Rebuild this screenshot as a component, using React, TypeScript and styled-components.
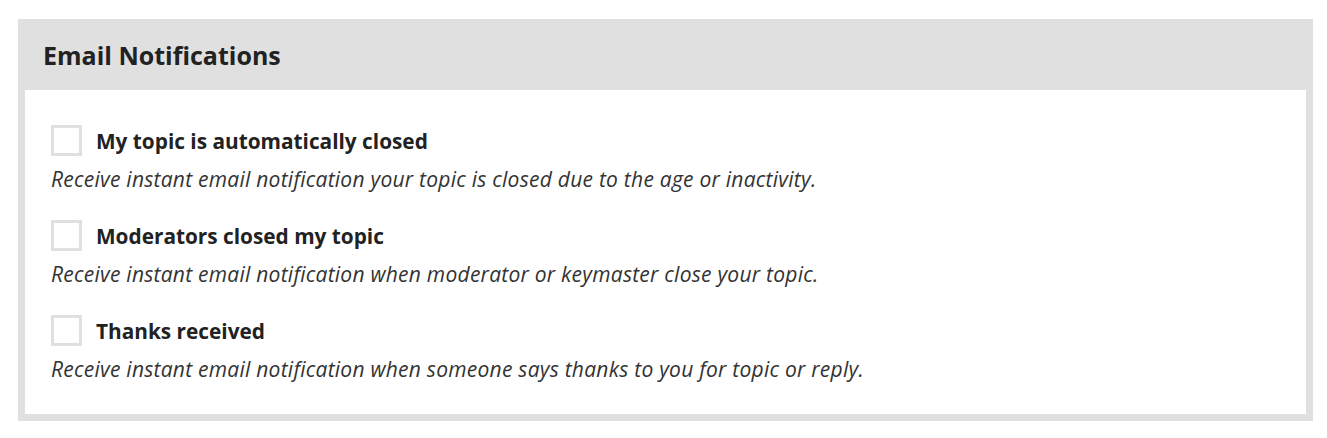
import React from "react";
import styled, { createGlobalStyle } from "styled-components";

const GlobalStyle = createGlobalStyle`
  body {
    margin: 0;
    background: #fff;
    font-family: "Open Sans", "Noto Sans", sans-serif;
    color: #222;
  }
`;

const Page = styled.div`
  padding: 19px 14px 17px 18px;
`;

const Panel = styled.section`
  background: #e0e0e0;
  padding: 0 7px 7px 7px;
`;

const PanelHeader = styled.h2`
  margin: 0;
  height: 71px;
  display: flex;
  align-items: center;
  padding-left: 18px;
  font-size: 25px;
  font-weight: 700;
  color: #222;
`;

const PanelBody = styled.div`
  background: #fff;
  padding: 35px 26px 31px 26px;
  display: flex;
  flex-direction: column;
  gap: 27px;
`;

const Option = styled.div`
  display: flex;
  flex-direction: column;
  gap: 9px;
`;

const OptionRow = styled.label`
  display: flex;
  align-items: center;
  gap: 14px;
  cursor: pointer;
`;

const Box = styled.input`
  appearance: none;
  margin: 0;
  width: 31px;
  height: 31px;
  border: 3px solid #e0e0e0;
  background: #fff;
  box-sizing: border-box;
`;

const OptionTitle = styled.span`
  font-size: 20.8px;
  font-weight: 700;
  color: #222;
`;

const OptionHint = styled.p`
  margin: 0;
  font-size: 21px;
  letter-spacing: 0.25px;
  font-style: italic;
  line-height: 28px;
  color: #333;
`;

const options = [
  {
    title: "My topic is automatically closed",
    hint: "Receive instant email notification your topic is closed due to the age or inactivity.",
  },
  {
    title: "Moderators closed my topic",
    hint: "Receive instant email notification when moderator or keymaster close your topic.",
  },
  {
    title: "Thanks received",
    hint: "Receive instant email notification when someone says thanks to you for topic or reply.",
  },
];

export default function App() {
  return (
    <>
      <GlobalStyle />
      <Page>
        <Panel>
          <PanelHeader>Email Notifications</PanelHeader>
          <PanelBody>
            {options.map((o) => (
              <Option key={o.title}>
                <OptionRow>
                  <Box type="checkbox" />
                  <OptionTitle>{o.title}</OptionTitle>
                </OptionRow>
                <OptionHint>{o.hint}</OptionHint>
              </Option>
            ))}
          </PanelBody>
        </Panel>
      </Page>
    </>
  );
}
